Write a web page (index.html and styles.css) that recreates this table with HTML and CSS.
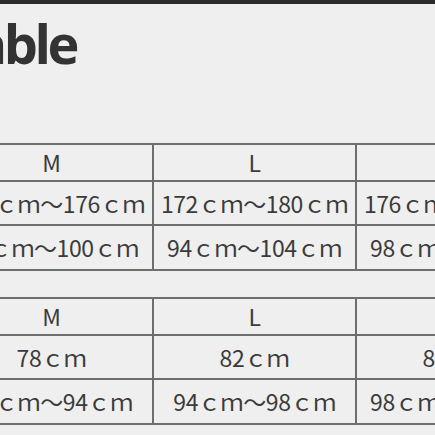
FILE: index.html
```html
<!DOCTYPE html>
<html lang="ja">
<head>
<meta charset="utf-8">
<link rel="stylesheet" href="styles.css">
</head>
<body>
<div class="topbar"></div>
<div class="page">
  <h1 class="title">Size table</h1>
  <table class="chart chart-first">
    <tr class="head"><td>M</td><td>L</td><td>XL</td></tr>
    <tr><td>168ｃｍ～176ｃｍ</td><td>172ｃｍ～180ｃｍ</td><td>176ｃｍ～184ｃｍ</td></tr>
    <tr class="last"><td>88ｃｍ～100ｃｍ</td><td>94ｃｍ～104ｃｍ</td><td>98ｃｍ～108ｃｍ</td></tr>
  </table>
  <table class="chart chart-second">
    <tr class="head"><td>M</td><td>L</td><td>XL</td></tr>
    <tr><td>78ｃｍ</td><td>82ｃｍ</td><td>86ｃｍ</td></tr>
    <tr class="last"><td>90ｃｍ～94ｃｍ</td><td>94ｃｍ～98ｃｍ</td><td>98ｃｍ～102ｃｍ</td></tr>
  </table>
</div>
</body>
</html>
```
FILE: styles.css
```css
html, body {
  margin: 0;
  padding: 0;
  background: #efefef;
  overflow: hidden;
}
.topbar {
  height: 4px;
  background: #2b2b2b;
}
.page {
  margin-left: -51px;
  width: 800px;
}
.title {
  margin: 0;
  padding-top: 9px;
  height: 130px;
  font-family: "Open Sans", "Noto Sans", sans-serif;
  font-weight: 700;
  font-size: 54px;
  line-height: 60px;
  letter-spacing: -3.4px;
  color: #333;
  text-indent: -96px;
  white-space: nowrap;
}
.chart {
  border-collapse: collapse;
  table-layout: fixed;
  width: 605px;
  font-family: "Noto Sans CJK JP", "Noto Sans", sans-serif;
  font-size: 23px;
  color: #3b3b3b;
  letter-spacing: -0.4px;
}
.chart td {
  border: 2px solid #6e6e6e;
  width: 201px;
  height: 42px;
  padding: 0;
  text-align: center;
  white-space: nowrap;
  overflow: hidden;
  line-height: 1;
}
.chart .head td {
  height: 35px;
}
.chart .last td {
  height: 43px;
}
.chart-second {
  margin-top: 26px;
}
```
